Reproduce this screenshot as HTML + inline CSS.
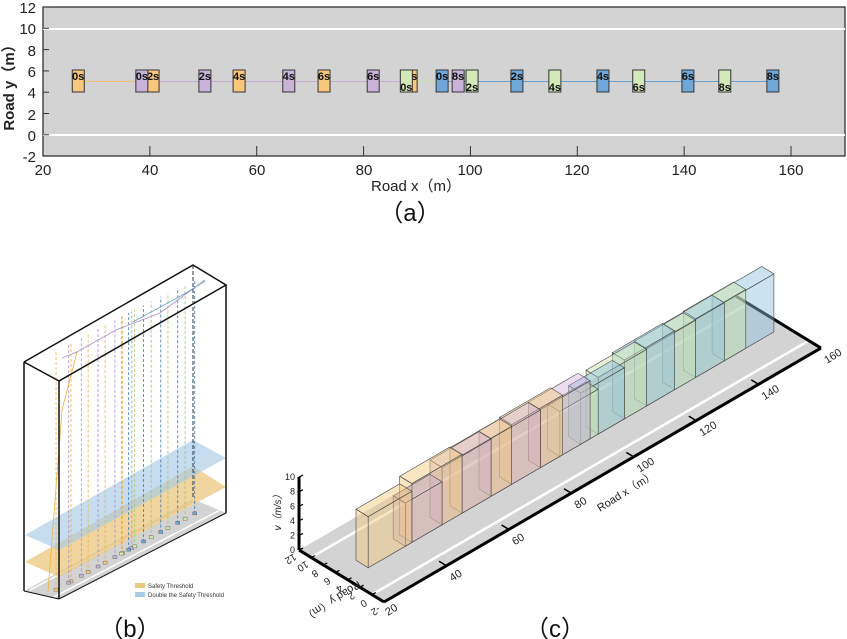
<!DOCTYPE html>
<html><head><meta charset="utf-8"><style>
html,body{margin:0;padding:0;background:#fff;width:847px;height:639px;overflow:hidden}
svg{display:block;font-family:"Liberation Sans","Noto Sans CJK SC",sans-serif}
</style></head><body>
<svg id="s" width="847" height="639" viewBox="0 0 847 639" xmlns="http://www.w3.org/2000/svg">
<rect width="847" height="639" fill="#fff"/>
<rect x="43" y="7" width="802" height="149" fill="#d3d3d3" stroke="#222" stroke-width="1.2"/>
<line x1="43" y1="29" x2="845" y2="29" stroke="#fff" stroke-width="2"/>
<line x1="43" y1="135" x2="845" y2="135" stroke="#fff" stroke-width="2"/>
<g id="a"></g>
<g font-size="15" fill="#222" text-anchor="end">
<text x="36" y="13">12</text><text x="36" y="34">10</text><text x="36" y="56">8</text><text x="36" y="77">6</text><text x="36" y="98">4</text><text x="36" y="120">2</text><text x="36" y="141">0</text><text x="36" y="162">-2</text>
</g>
<g font-size="15" fill="#222" text-anchor="middle">
<text x="43" y="175">20</text><text x="150" y="175">40</text><text x="257" y="175">60</text><text x="364" y="175">80</text><text x="470" y="175">100</text><text x="577" y="175">120</text><text x="684" y="175">140</text><text x="791" y="175">160</text>
</g>
<text x="416" y="191" font-size="15" text-anchor="middle" fill="#222">Road x（m）</text>
<text transform="translate(14,84) rotate(-90)" font-size="15" font-weight="bold" text-anchor="middle" fill="#222">Road y（m）</text>
<text x="410" y="221" font-size="24" text-anchor="middle" fill="#111">（a）</text>

<g id="b">
<polygon points="24,591 59,599 226,513 193,499" fill="#d3d3d3"/>
<line x1="30" y1="590" x2="200" y2="500" stroke="#fff" stroke-width="1.5"/>
<line x1="52" y1="598" x2="220" y2="510" stroke="#fff" stroke-width="1.5"/>
<polygon points="25,562 59,577 226,487 193,466" fill="#ecc77e" opacity="0.75"/>
<polygon points="25,535 59,550 226,458 193,440" fill="#a8cbe8" opacity="0.65"/>
<g id="bl"></g>
<polyline points="24,362 59,381 226,285 193,265 24,362" fill="none" stroke="#111" stroke-width="1.5"/>
<line x1="24" y1="362" x2="24" y2="591" stroke="#111" stroke-width="1.5"/>
<line x1="59" y1="381" x2="59" y2="599" stroke="#111" stroke-width="1.5"/>
<line x1="226" y1="285" x2="226" y2="513" stroke="#111" stroke-width="1.5"/>
<line x1="193" y1="265" x2="193" y2="499" stroke="#333" stroke-width="1" stroke-dasharray="4,2"/>
<line x1="24" y1="591" x2="59" y2="599" stroke="#111" stroke-width="1"/>
<line x1="59" y1="599" x2="226" y2="513" stroke="#111" stroke-width="1"/>
<rect x="135" y="583" width="10" height="5" fill="#ecc77e"/>
<rect x="135" y="592" width="10" height="5" fill="#a8cbe8"/>
<text x="148" y="588" font-size="6" fill="#333">Safety Threshold</text>
<text x="148" y="597" font-size="6" fill="#333">Double the Safety Threshold</text>
</g>
<text x="130" y="637" font-size="24" text-anchor="middle" fill="#111">（b）</text>

<g id="c"></g>
<text x="555" y="637" font-size="24" text-anchor="middle" fill="#111">（c）</text>
</svg>
<script>
var NS="http://www.w3.org/2000/svg";
function el(p,t,a,txt){var e=document.createElementNS(NS,t);for(var k in a)e.setAttribute(k,a[k]);if(txt!=null)e.textContent=txt;p.appendChild(e);return e;}
var cols={o:"#f9c77c",p:"#c9b3d9",g:"#d3e9b7",b:"#6fa8d8"};
var lcol={o:"#f0c070",p:"#c9a9d6",g:"#c8e0a8",b:"#6aa0cc"};
var veh={o:[26.6,40.6,56.7,72.6,88.9],p:[38.5,50.3,66,81.8,97.7],g:[88,100.3,115.8,131.5,147.6],b:[94.7,108.7,124.8,140.7,156.6]};
var A=document.getElementById("a");
function px(X){return 43+(X-20)*5.343;}
for(var i=40;i<=160;i+=20){el(A,"line",{x1:px(i),y1:156,x2:px(i),y2:146,stroke:"#333","stroke-width":1});}
for(var j=0;j<=12;j+=2){var yy=7+(12-j)*10.65;el(A,"line",{x1:43,y1:yy,x2:49,y2:yy,stroke:"#333","stroke-width":1});}
["o","p","g","b"].forEach(function(k){var v=veh[k];el(A,"line",{x1:px(v[0]),y1:81.5,x2:px(v[4]),y2:81.5,stroke:lcol[k],"stroke-width":1});});
["o","p","g","b"].forEach(function(k){var v=veh[k];v.forEach(function(X,i){
 var x=px(X);el(A,"rect",{x:x-6,y:70,width:12,height:22,fill:cols[k],stroke:"#333","stroke-width":1});
 el(A,"text",{x:x,y:(k=="g"?91:80),"font-size":11,"font-weight":"bold","text-anchor":"middle",fill:"#111"},(2*i)+"s");
});});
var BL=document.getElementById("bl");
var dc={o:"#f0b040",p:"#b08cc8",g:"#9cc860",b:"#3a78b0"};
["o","p","g","b"].forEach(function(k){veh[k].forEach(function(X){
 var t=(X-20)/150;var x=49+160*t,y=594-88*t;var top=354-82*t;
 el(BL,"line",{x1:x,y1:y,x2:x,y2:top,stroke:dc[k],"stroke-width":0.8,"stroke-dasharray":"3,2"});
 el(BL,"rect",{x:x-2,y:y-2,width:4,height:3,fill:cols[k],stroke:"#555","stroke-width":0.4});
});});
el(BL,"polyline",{points:"48,592 62,410 77,352",fill:"none",stroke:"#f0b040","stroke-width":0.8});
el(BL,"polyline",{points:"62,358 77,352 116,330 160,313 205,280",fill:"none",stroke:"#b08cc8","stroke-width":0.8});
el(BL,"polyline",{points:"133,322 186,293 205,281",fill:"none",stroke:"#6aa0cc","stroke-width":0.8});
var C=document.getElementById("c");
function S(X,Y,V){return [384+(X-20)*3.121-(Y+2)*6.07, 602-(X-20)*1.814-(Y+2)*3.71-V*7.3];}
function P(a){return a.map(function(q){return q[0].toFixed(1)+","+q[1].toFixed(1);}).join(" ");}
el(C,"polygon",{points:P([S(20,-2,0),S(160,-2,0),S(160,12,0),S(20,12,0)]),fill:"#d3d3d3"});
[0,10].forEach(function(Y){var a=S(20,Y,0),b=S(160,Y,0);el(C,"line",{x1:a[0],y1:a[1],x2:b[0],y2:b[1],stroke:"#fff","stroke-width":2.5});});
var ax=[[S(20,-2,0),S(160,-2,0)],[S(20,-2,0),S(20,12,0)],[S(20,12,0),S(20,12,10)],[S(160,-2,0),S(160,12,0)]];
ax.forEach(function(l){el(C,"line",{x1:l[0][0],y1:l[0][1],x2:l[1][0],y2:l[1][1],stroke:"#000","stroke-width":3});});
for(var X=40;X<=160;X+=20){var a=S(X,-2,0),b=S(X,-0.8,0);el(C,"line",{x1:a[0],y1:a[1],x2:b[0],y2:b[1],stroke:"#000","stroke-width":1.5});
 el(C,"text",{transform:"translate("+(a[0]+6)+","+(a[1]+16)+") rotate(-32)","font-size":11,fill:"#222"},X);}
el(C,"text",{transform:"translate("+(S(20,-2,0)[0]+4)+","+(S(20,-2,0)[1]+14)+") rotate(-32)","font-size":11,fill:"#222"},"20");
for(var Y=-2;Y<=12;Y+=2){var a=S(20,Y,0);el(C,"line",{x1:a[0],y1:a[1],x2:a[0]+4,y2:a[1]-2,stroke:"#000","stroke-width":1.2});
 el(C,"text",{transform:"translate("+(a[0]-10)+","+(a[1]+6)+") rotate(148)","font-size":10,fill:"#222","text-anchor":"middle"},Y);}
el(C,"text",{transform:"translate(330,598) rotate(148)","font-size":11,fill:"#222","text-anchor":"middle"},"Road y（m）");
el(C,"text",{transform:"translate(600,512) rotate(-32)","font-size":11,fill:"#222"},"Road x（m）");
for(var v=0;v<=10;v+=2){var a=S(20,12,v);el(C,"line",{x1:a[0],y1:a[1],x2:a[0]+4,y2:a[1]-2,stroke:"#000","stroke-width":1.2});
 el(C,"text",{x:a[0]-4,y:a[1]+3,"font-size":9,fill:"#222","text-anchor":"end"},v);}
el(C,"text",{transform:"translate(281,510) rotate(-90)","font-size":10,fill:"#222","text-anchor":"middle","font-style":"italic"},"v（m/s）");
var bc={o:"rgba(245,200,120,0.45)",p:"rgba(200,170,215,0.4)",g:"rgba(205,228,175,0.5)",b:"rgba(140,190,225,0.45)"};
var boxes=[];
["o","p","g","b"].forEach(function(k){var p=veh[k];for(var i=0;i<4;i++){boxes.push({k:k,x0:p[i],x1:p[i+1],h:(p[i+1]-p[i])/2});}});
boxes.sort(function(a,b){return b.x0-a.x0;});
boxes.forEach(function(B){
 var f=bc[B.k],st={stroke:"#444","stroke-width":0.6};
 function poly(pts){var o={points:P(pts),fill:f};for(var s in st)o[s]=st[s];el(C,"polygon",o);}
 poly([S(B.x0,6,B.h),S(B.x1,6,B.h),S(B.x1,4,B.h),S(B.x0,4,B.h)]);
 poly([S(B.x0,4,0),S(B.x1,4,0),S(B.x1,4,B.h),S(B.x0,4,B.h)]);
 poly([S(B.x0,6,0),S(B.x0,4,0),S(B.x0,4,B.h),S(B.x0,6,B.h)]);
});
</script>
</body></html>
